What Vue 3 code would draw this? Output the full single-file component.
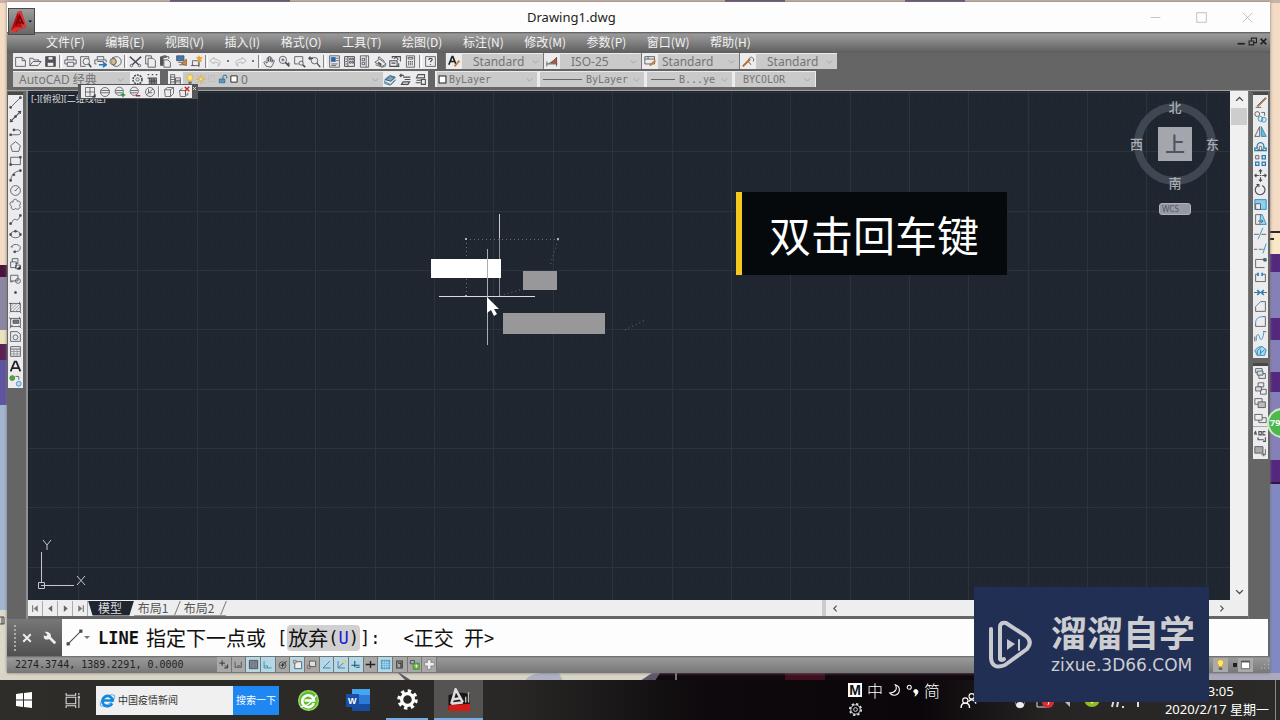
<script setup>
import { h } from 'vue'

const icons = {
  new: '<path d="M2 3h8l4 4v7H2zM10 3v4h4"/>',
  open: '<path d="M1 13V4h4l1 2h6v2M1 13l4-5h10l-4 5z"/>',
  save: '<path d="M2 2h12v12H2z" fill="#50545a"/><path d="M5 2h6v4H5zM4 9h8v5H4z" fill="#eee"/>',
  print: '<path d="M4 6V2h8v4M4 11H1V6h14v5h-3M4 9h8v5H4z"/>',
  preview: '<path d="M12 5V2H2v12h6"/><circle cx="9" cy="8" r="4"/><path d="M12 11l3 4" stroke-width="2"/>',
  publish: '<path d="M4 6V2h8v4M3 11H1V6h14v3M4 8h8"/><path d="M6 12h8M11 9l4 3-4 3" stroke="#2579b8" stroke-width="2"/>',
  sphere: '<circle cx="9" cy="8" r="6"/><path d="M4 3c6 2 6 8 1 10" /><circle cx="5" cy="8" r="4" fill="#c7a75f" opacity=".7"/>',
  cut: '<path d="M1 2l11 10M15 2L4 12" stroke-width="1.8"/><circle cx="3" cy="13" r="1.500"/><circle cx="13" cy="13" r="1.500"/>',
  copy: '<path d="M5 11H2V1h7v3M5 4h6l3 3v8H5z"/>',
  paste: '<path d="M5 13H2V2h10v3M5 1h4v2H5zM6 6h5l3 3v6H6z" /><path d="M2 3h3v9H2z" fill="#555"/>',
  match: '<path d="M2 1h9v6H2z" fill="#3f77bd"/><path d="M4 9h9M5 12h7" stroke="#555"/><path d="M8 11l6-6v8z" fill="#c78b35" stroke="#8d5d27"/>',
  block: '<path d="M3 7h8v6H3zM1 13h4M11 9v6"/><path d="M11 1l1 2 3 0-2 2 1 3-3-1-2 1 1-3-2-2h3z" fill="#e8a02d" stroke="#e8a02d"/>',
  undo: '<path d="M6 3L1 7l5 4V9c5-1 7 1 5 5 5-5 2-9-5-9z" stroke="#aaa"/>',
  redo: '<path d="M10 3l5 4-5 4V9C5 8 3 10 5 14 0 9 3 5 10 5z" stroke="#aaa"/>',
  pan: '<path d="M4 14L1 9l1-1 3 2V4l1-1 1 5V2h2v6l1-5 1 1v5l1-3 2 1-2 5-2 3z"/>',
  zoom: '<circle cx="6" cy="6" r="4.5"/><path d="M9 9l5 5" stroke-width="2"/><path d="M6 4v4M4 6h4M13 9v4M11 11h4"/>',
  zoomwin: '<path d="M2 2h10v7M2 2v9h5"/><circle cx="10" cy="10" r="2.5"/><path d="M12 12l3 3" stroke-width="2"/>',
  zoomprev: '<circle cx="8" cy="7" r="4"/><path d="M11 10l4 5M1 4h5M3 2L1 4l2 2" stroke-width="1.6"/>',
  props: '<path d="M2 1h12v14H2z"/><path d="M4 3h5v5H4z" fill="#2f68a8" stroke="#2f68a8"/><path d="M10 4h3M10 7h3M4 11h8M4 13h6"/>',
  dc: '<path d="M2 2h12v12H2zM6 2v12" stroke-width="1.2"/><path d="M8 4h2v2H8zM11 4h2v2h-2zM8 8h2v2H8zM11 8h2v2h-2zM3 5h2M3 8h2M3 11h2"/>',
  palette: '<path d="M3 1h10v14H3zM10 1v14M5 4h3v3H5zM5 9h3v3H5z"/>',
  sheet: '<path d="M1 9l6-4 8 6-5 3zM2 12l8 3 5-2M5 5l1-3 7 6"/><path d="M5 9l4 3" stroke-width="2"/>',
  markup: '<path d="M4 4V2h10v6M1 7h9v7H1zM3 10h5M6 5c2-3 5-2 5 1M12 10v4h-2" stroke-width="1.3"/>',
  calc: '<path d="M3 1h10v14H3zM5 3h6v2H5z"/><path d="M5 8h6M5 10h6M5 12h6" stroke-width="1.4" stroke-dasharray="1.5 1"/>',
  help: '<path d="M2 2h12v12H2z"/><path d="M6 6c0-3 5-2 4 0-1 1-2 1-2 3M8 11v1" stroke-width="1.5"/>',
  textstyle: '<path d="M1 12L5 2h1l4 10M3 8h5" stroke="#222" stroke-width="2"/><path d="M8 14l6-7" stroke="#c2843d" stroke-width="2.4"/>',
  dimstyle: '<path d="M1 11h13M1 8v6M13 3v11M3 11l9-6" /><path d="M6 10l7-7v7z" fill="#b45c43" stroke="#7d4b3a"/>',
  tablestyle: '<path d="M1 2h12v9H1zM1 5h12M5 2v3"/><path d="M7 13l7-6" stroke="#c2843d" stroke-width="2.6"/>',
  leader: '<path d="M8 8c0-8 8-6 6 0M8 8l3 4"/><path d="M1 14l9-9" stroke="#b76d38" stroke-width="2.6"/>',
  gear: '<circle cx="8" cy="8" r="5.5" stroke-width="2" stroke-dasharray="2.4 1.1"/><circle cx="8" cy="8" r="2"/>',
  wsgrid: '<path d="M4 6h9v8H4z" fill="#888"/><path d="M2 2h2M7 2h2M12 2h2M2 6l3 1M7 6v8M10 6v8M4 10h9" stroke-width="1.4"/>',
  layers: '<path d="M2 2h5v12H2zM2 5h5M2 8h5M2 11h5M8 6h6v8H8zM8 9h6M8 11h6"/>',
  bulb: '<path d="M5 9C1 4 5 1 8 1s7 3 3 8v2H5z" fill="#ffe56b" stroke="#c99b21"/><path d="M6 13h4v2H6z" fill="#777"/>',
  sun: '<circle cx="8" cy="8" r="3" fill="#ffe15b" stroke="#da9b25"/><path d="M8 0v4M8 12v4M0 8h4M12 8h4M2 2l3 3M11 11l3 3M14 2l-3 3M5 11l-3 3" stroke="#da9b25"/>',
  freeze: '<path d="M2 3h10v9H2zM2 7h5" stroke="#b5b5b5"/>',
  lock: '<path d="M2 8h9v6H2z" fill="#5797c4" stroke="#245e8d"/><path d="M8 8V4c0-3 6-3 6 0v3" stroke="#245e8d" stroke-width="1.5"/>',
  square: '<path d="M3 3h10v10H3z" fill="#fff" stroke="#222" stroke-width="1.5"/>',
  layerset: '<path d="M1 8l6-5 7 2-5 5zM1 11l7 3 6-6M1 9v4l7 2 6-6" stroke="#276e9b"/><path d="M2 8l6-4 5 2-5 4z" fill="#70abd0"/>',
  layerprev: '<path d="M5 5h9M7 8h7M5 11h8l-2 3H3zM1 3h5M3 1L1 3l2 2" stroke-width="1.4"/>',
  layerstate: '<path d="M5 2h8v4H3zM3 9h7M2 12h6M9 8h5v6H9z" stroke-width="1.3"/>',
  wire: '<path d="M2 2h12v12H2zM2 8h12M8 2v12"/><path d="M15 11v4h-4z" fill="#222"/>',
  ball: '<circle cx="8" cy="8" r="6"/><path d="M2 6h12M2 9h12"/>',
  ballplus: '<circle cx="7" cy="7" r="5.5"/><path d="M2 6h10M2 9h9"/><path d="M9 12h6M12 9v6" stroke="#2e9a35" stroke-width="2"/>',
  ballminus: '<circle cx="7" cy="7" r="5.5"/><path d="M2 6h10M2 9h9"/><path d="M9 13h6" stroke="#b52b25" stroke-width="2"/>',
  ballslash: '<circle cx="8" cy="8" r="6"/><path d="M3 12L12 4M6 4v5h5"/>',
  cube: '<path d="M2 5l4-3h8v8l-4 4H3zM2 5h8v9M10 5l4-3"/>',
  cubex: '<path d="M2 6l4-3M2 6h8v8H3zM10 6v6h3V9"/><path d="M9 1l6 6M15 1L9 7" stroke="#d22b28" stroke-width="2"/>',
  line: '<path d="M2 14L14 2"/><path d="M1 13h2v2H1zM13 1h2v2h-2z" fill="#444"/>',
  xline: '<path d="M1 15L15 1M2 11v3h3M11 2h3v3" stroke-width="1.3"/><path d="M7 7h2v2H7z" fill="#444"/>',
  pline: '<path d="M2 12h9c5 0 4-7-1-6H6"/><path d="M1 11h2v2H1zM5 5h2v2H5z" fill="#444"/>',
  polygon: '<path d="M8 2l6 5-2 7H4L2 7z"/>',
  rect: '<path d="M2 4h12v9H2z"/><path d="M1 12h2v2H1zM13 3h2v2h-2z" fill="#444"/>',
  arc: '<path d="M2 14C3 7 7 3 14 2"/><path d="M1 13h2v2H1zM5 6h2v2H5zM13 1h2v2h-2z" fill="#444"/>',
  circle: '<circle cx="8" cy="8" r="6"/><path d="M8 8l4-4M7 8h2"/>',
  cloud: '<path d="M5 3c3-3 5-1 5 1 4-1 5 3 3 5 2 4-2 6-5 4-3 3-6 0-5-3C0 8 1 4 5 5z"/>',
  spline: '<path d="M1 13c3 2 3-7 7-5s4-2 6-5"/><path d="M1 12h2v2H1zM13 2h2v2h-2z" fill="#444"/>',
  ellipse: '<ellipse cx="8" cy="8" rx="6" ry="4"/><path d="M1 7h2v2H1zM13 7h2v2h-2zM7 3h2v2H7z" fill="#444"/>',
  ellarc: '<path d="M3 6c2-5 11-3 11 1s-4 5-7 5"/><path d="M2 6h3M6 11h2v2H6z" fill="#444"/>',
  insert: '<path d="M4 6V2h7v6H8M2 6h7v7H2zM8 10h6v4H8z"/><path d="M14 11v4h-4z" fill="#222"/>',
  mkblock: '<path d="M2 4h9v7H2z"/><circle cx="11" cy="11" r="3"/><path d="M1 12h4"/>',
  point: '<path d="M7 7h2v2H7z" fill="#333"/>',
  hatch: '<path d="M2 3h12v10H2z"/><path d="M2 7l4-4M2 11l8-8M4 13L14 3M8 13l6-6" stroke="#8a8d92"/><path d="M0 3h3M13 1v3M1 14l2-2M13 13l2 2"/>',
  gradient: '<path d="M2 3h12v10H2z"/><path d="M5 5h7v4H5z" fill="#777"/><path d="M0 2l3 2M13 1v3M1 15l3-4M12 12l3 3"/>',
  region: '<path d="M2 2h8l4 3v9H2z"/><circle cx="8" cy="9" r="3"/>',
  table: '<path d="M2 2h12v12H2zM2 5h12"/><path d="M2 8h12M2 11h12M6 5v9M10 5v9" stroke="#8a8d92"/>',
  text: '<path d="M2 14L7 2h2l5 12M4 10h8" stroke="#222" stroke-width="2.2"/>',
  addsel: '<circle cx="4" cy="5" r="3" fill="#55a73b" stroke="#338426"/><path d="M8 3h4v4"/><circle cx="12" cy="12" r="3" fill="#b1ddf8" stroke="#3687bb"/>',
  erase: '<path d="M4 12l1 1L15 3l-1-1z" fill="#c69261" stroke="#7a4c30"/><path d="M2 14h7"/>',
  copyobj: '<circle cx="4" cy="5" r="3"/><path d="M9 3h4v4"/><circle cx="8" cy="11" r="3" stroke="#2484b6"/><circle cx="12" cy="12" r="3" stroke="#2484b6"/>',
  mirror: '<path d="M7 2v12H1z"/><path d="M9 2v12h6z" fill="#70bbdf" stroke="#287fa9"/>',
  offset: '<path d="M1 13h14v-3h-3c2-9-10-9-8 0H1z" stroke="#237ca9" stroke-width="1.5"/><path d="M4 12h3c-3-6 5-6 2 0h3"/>',
  array: '<path d="M2 2h4v4H2z"/><path d="M10 2h4v4h-4zM2 10h4v4H2zM10 10h4v4h-4z" stroke="#237cb5" stroke-width="1.5"/>',
  move: '<path d="M8 1v5M8 10v5M1 8h5M10 8h5M6 3l2-2 2 2M6 13l2 2 2-2M3 6L1 8l2 2M13 6l2 2-2 2M7 8h2" stroke-width="1.4"/>',
  rotate: '<path d="M5 3a6 6 0 1 0 5 0M3 2h3v3" stroke-width="1.4"/>',
  scale: '<path d="M1 2h14v12H1z" fill="#8dcff0" stroke="#237cb5"/><path d="M2 7h6v7H2z" fill="#eee"/>',
  stretch: '<path d="M2 2h6v12H2z"/><path d="M8 2h2l5 12H7z" fill="#a4d8f0" stroke="#237cb5"/><path d="M5 10h6M9 8l2 2-2 2"/>',
  trim: '<path d="M0 9h6M9 9h6" /><path d="M11 1L5 15" stroke="#2484b6"/>',
  extend: '<path d="M0 9h4M6 9h3"/><path d="M9 9h3M15 2l-4 12" stroke="#2484b6"/>',
  breakpt: '<path d="M2 13V3h11M2 13h11"/><path d="M12 2h3v3h-3z" fill="#237cb5"/>',
  break: '<path d="M5 4H2v9h12V4h-3"/><path d="M5 2v4M10 2v4" stroke="#237cb5" stroke-width="2"/>',
  join: '<path d="M0 8h16" /><path d="M4 5l3 3-3 3M12 5L9 8l3 3" stroke="#2484b6" stroke-width="2"/>',
  chamfer: '<path d="M2 8v6h12V2H8"/><path d="M2 8l6-6" stroke="#2484b6"/>',
  fillet: '<path d="M2 10v4h12V2h-3"/><path d="M2 10c0-5 3-8 9-8" stroke="#2484b6"/>',
  blend: '<path d="M3 13C2 4 6 4 7 9s4 3 5-6" stroke="#2484b6"/><path d="M11 2h4M1 14V8"/>',
  explode: '<path d="M1 8l4-4 5-1 5 4-2 7H4z" fill="#a8daf1" stroke="#237cb5"/><path d="M4 8l5-4M7 12l6-5M4 8v6M8 7v6" stroke="#237cb5"/>',
  front: '<path d="M2 2h8v5H2zM6 8h8v6H6z"/><path d="M4 5h7v5H4z" fill="#c7e4f2"/>',
  back: '<path d="M5 1h7v5H5zM8 9h7v6H8z"/><path d="M2 6h7v5H2z" fill="#ddd"/>',
  above: '<path d="M1 2h9v7H1z"/><path d="M5 6h9v7H5z" fill="#bbb"/>',
  under: '<path d="M6 7h9v6H6z"/><path d="M1 3h9v7H1z" fill="#eee"/>',
  abc: '<path d="M1 6V3l1-1 1 4M6 2v4h3V2zM14 2h-3v4h3M5 9v3h7M14 9v5h-3" stroke-width="1.3"/>',
  hatchback: '<path d="M9 12h5V5M12 14v-4"/><path d="M1 2h10v8H1z" fill="#aaa"/>',
  s1: '<path d="M2 6h8M6 2v8M10 9l4 4M9 13h5V8" stroke-width="1.4"/>',
  s2: '<path d="M3 4v8h9V4M6 10h4"/>',
  s3: '<path d="M2 2h12v12H2z" fill="#777b89"/><path d="M4 2v12M8 2v12M12 2v12" stroke="#8a8c98"/>',
  s4: '<path d="M3 3v10h11M3 10h5v3" stroke="#277795"/>',
  s5: '<circle cx="8" cy="9" r="5"/><path d="M8 9l6-6M5 9h6M8 6v6" stroke-width="1.4"/>',
  s6: '<path d="M4 4h10v10H4z" fill="#eee"/><path d="M2 2h4v4H2z" fill="#a0cce1" stroke="#a05a40"/>',
  s7: '<path d="M5 3h9v8H5z" fill="#ddd"/><path d="M2 9h4v5H2z" stroke="#995b47"/>',
  s8: '<path d="M13 3L3 13h11" stroke="#235f86"/>',
  s9: '<path d="M3 3v10h10M4 12l10-9" stroke="#305c79"/><path d="M10 2h4v4h-4z" fill="#efcf5d" stroke="none"/>',
  s10: '<path d="M2 9h12M7 3v9M9 12h5" stroke="#195579" stroke-width="1.6"/>',
  s11: '<path d="M1 8h14M8 3v10" stroke="#222" stroke-width="2"/>',
  s12: '<path d="M2 2h12v12H2z" fill="#6ab3dc" stroke="#397b9c"/><path d="M5 2v12M8 2v12M11 2v12M2 5h12M2 8h12M2 11h12" stroke="#9dd5f1"/>',
  s13: '<path d="M4 3h8v10H4zM6 6h4v6" stroke-width="1.5"/>',
  s14: '<path d="M2 2h6v5H2z"/><path d="M6 6h9v9H6z" fill="#62b94a" stroke="#3d7d30"/><path d="M8 10h5M11 8v5" stroke="#fff"/>',
  s15: '<path d="M5 1h5v4h5v5h-5v5H5v-5H1V5h4z" fill="#eee" stroke="#777"/>',
  down: '<path d="M3 6l5 5 5-5"/>', up: '<path d="M3 10l5-5 5 5" stroke-width="2"/>',
  left: '<path d="M10 3L5 8l5 5" stroke-width="2"/>', right: '<path d="M6 3l5 5-5 5" stroke-width="2"/>',
  downbold: '<path d="M3 6l5 5 5-5" stroke-width="2"/>',
  first: '<path d="M3 2v12" stroke-width="2"/><path d="M12 2v12L5 8z" fill="#777" stroke="none"/>',
  prev: '<path d="M11 2v12L4 8z" fill="#666" stroke="none"/>',
  next: '<path d="M5 2v12l7-6z" fill="#666" stroke="none"/>',
  last: '<path d="M13 2v12" stroke-width="2"/><path d="M4 2v12l7-6z" fill="#777" stroke="none"/>',
  x: '<path d="M3 3l10 10M13 3L3 13" stroke="#eee" stroke-width="2.6"/>',
  wrench: '<path d="M14 14L6 6" stroke="#eee" stroke-width="3"/><path d="M2 1l3 3-1 2-3-1c-1 4 3 6 6 4l2-2c1-4-3-7-7-6z" fill="#eee" stroke="none"/>',
  min: '<path d="M1 8h14"/>', max: '<path d="M1 1h14v14H1z"/>', close: '<path d="M1 1l14 14M15 1L1 15"/>',
  mdimin: '<path d="M1 12h13" stroke="#222" stroke-width="3"/>',
  mdimax: '<path d="M2 7h8v7H2zM6 6V2h9v8h-4" stroke="#222" stroke-width="2"/>',
  mdiclose: '<path d="M3 3l10 10M13 3L3 13" stroke="#222" stroke-width="3"/>',
  win: '<path d="M0 2l7-1v6.500H0zM8 1l8-1v7.500H8zM0 8.500h7V15l-7-1zM8 8.500h8V16l-8-1z" fill="#fff" stroke="none"/>',
  task: '<path d="M2 1v2h9V1M2 5h9v6H2zM2 15v-2h9v2M14 1v2M14 6v9" stroke="#ddd"/><path d="M13 4h2v2h-2z" fill="#ddd" stroke="none"/>',
  ie: '<ellipse cx="8" cy="8" rx="9" ry="4" transform="rotate(-35 8 8)" stroke="#69b7e9" stroke-width="1.2"/><path d="M13 11a5.500 5.500 0 1 1 .5-3H4" stroke="#1686d9" stroke-width="2.800"/>',
  browser: '<circle cx="8" cy="8" r="7.500" fill="#61bd30" stroke="#9bdf68"/><path d="M12 10a4.500 4.500 0 1 1 .2-2H5" stroke="#fff" stroke-width="2"/><path d="M2 13Q9 12 14 4" stroke="#fff"/>',
  biggear: '<circle cx="8" cy="8" r="6.500" fill="none" stroke="#fff" stroke-width="2.600" stroke-dasharray="2.550 2.550"/><circle cx="8" cy="8" r="4.500" stroke="#fff" stroke-width="2.500"/>',
  smallgear: '<circle cx="8" cy="8" r="6" stroke="#ddd" stroke-width="2" stroke-dasharray="2.400 2.300"/><circle cx="8" cy="8" r="5" stroke="#ddd"/><circle cx="8" cy="8" r="2" stroke="#ddd"/>',
  moon: '<path d="M9 1c3 5 0 10-7 10 4 5 12 3 12-4 0-3-2-5-5-6z" stroke="#fff" stroke-width="1.300"/>',
  punct: '<circle cx="4" cy="4" r="2.500" stroke="#fff" stroke-width="1.300"/><path d="M11 7c5-1 5 5 0 8 1-2 1-3 0-4-2 0-2-4 0-4z" fill="#fff" stroke="#fff"/>',
  people: '<circle cx="5" cy="8" r="2.500" stroke="#fff"/><circle cx="11" cy="4" r="2.500" stroke="#fff"/><path d="M1 15c0-6 8-6 8 0M8 9c2-3 6-2 7 2" stroke="#fff" stroke-width="1.300"/>',
  whitesq: '<path d="M2 3h12v11H2z" fill="#fff" stroke="#444"/><path d="M2 4h12" stroke-width="2"/>',
  acad: '<path d="M1 5l6-2 9 1v11H1z" fill="#1c1516" stroke="none"/><path d="M1 12l15-1v5H1z" fill="#d51b16" stroke="none"/><path d="M3 11L6 1l5 9M4 8l6-1M3 11l8-1" stroke="#ddd" stroke-width="1.800"/><path d="M15 3v7M13 6v4" stroke="#bbb"/>',
  grip: '<path d="M13 3h1M13 8h1M13 13h1M8 8h1M8 13h1M3 13h1" stroke="#ccc" stroke-width="2"/>',
}
const Icon = (p) => h('svg', { viewBox: '0 0 16 16', class: 'icon', 'aria-hidden': 'true', innerHTML: icons[p.name] })
Icon.props = ['name']

const menus = ['文件(F)', '编辑(E)', '视图(V)', '插入(I)', '格式(O)', '工具(T)', '绘图(D)', '标注(N)', '修改(M)', '参数(P)', '窗口(W)', '帮助(H)']
const standard = 'new open save | print preview publish sphere | cut copy paste match block | undo . redo . | pan zoom zoomwin zoomprev | props dc palette sheet markup calc | help'.split(' ')
const styleBoxes = [
  { icon: 'textstyle', label: '文字样式', text: 'Standard', size: 'indent' },
  { icon: 'dimstyle', label: '标注样式', text: 'ISO-25', size: 'indent' },
  { icon: 'tablestyle', label: '表格样式', text: 'Standard', size: 'flush' },
  { icon: 'leader', label: '引线样式', text: 'Standard', size: 'indent' },
]
const draw = 'line xline pline polygon rect arc circle cloud spline ellipse ellarc insert mkblock point hatch gradient region table text addsel'.split(' ')
const modify = 'erase copyobj mirror offset array move rotate scale stretch trim extend breakpt break join chamfer fillet blend explode'.split(' ')
const order = 'front back above under | abc hatchback'.split(' ')
const meshes = 'wire ball ballplus ballminus ballslash | cube cubex'.split(' ')
const status = Array.from({ length: 15 }, (_, i) => 's' + (i + 1))
const activeStatus = [3, 4, 6, 8, 9, 10, 12]
const columns = Array.from({ length: 44 }, (_, i) => Math.round(50 + i * 59.35))
const rows = Array.from({ length: 24 }, (_, i) => Math.round(1 + i * 59.35))
</script>

<template>
  <div class="desktop">
    <svg class="wallpaper" viewBox="0 0 1280 720" preserveAspectRatio="none" aria-hidden="true">
      <rect width="1280" height="720" fill="#f4dcc4" />
      <path d="M0 265h8v12H0z" fill="#4a1438" /><path d="M0 277h8v53H0z" fill="#8d87a3" />
      <path d="M0 330h8v14H0z" fill="#e9e2bd" /><path d="M0 344h8v16H0z" fill="#5a2252" />
      <path d="M0 360h8v45H0z" fill="#5f559f" /><path d="M0 405h8v205H0z" fill="#a3b5cf" /><path d="M0 610h8v64H0z" fill="#ddd8ca" />
      <path d="M0 617h4v7H0M2 617v7" fill="none" stroke="#444" />
      <path d="M0 0h1280v3H0z" fill="#c9b2a7" /><path d="M170 0h120v3H170zM725 0h60v3h-60zM905 0h60v3h-60z" fill="#665777" />
      <path d="M1269 232h11v22h-11z" fill="#f8e8c6" /><path d="M1269 232h11M1269 239h5" stroke="#352031" stroke-width="2" />
      <path d="M1269 254h11v230h-11z" fill="#8580b8" /><path d="M1269 254h11v18h-11zM1269 318h11v22h-11zM1269 372h11v20h-11zM1269 460h11v22h-11z" fill="#54287f" />
      <path d="M1269 484h11v196h-11z" fill="#8189c3" /><path d="M1269 483h11" stroke="#31143c" stroke-width="2" />
      <path d="M0 673h680v8H0z" fill="#d9d5c6" /><path d="M400 673l12 8h-6l-8-8M640 681l12-8h28v8z" fill="#5e556c" />
      <path d="M525 681c4-10 28-9 34-8l4 8z" fill="#aeb1c1" /><path d="M660 673h320v8H655z" fill="#130710" />
      <path d="M676 673v8" stroke="#ddd" /><path d="M785 673h40v8h-40z" fill="#401020" /><path d="M980 673h300v8H980z" fill="#aba9bb" />
    </svg>

    <main class="window">
      <header class="titlebar">
        <h1>Drawing1.dwg</h1>
        <div class="winctl">
          <button aria-label="最小化"><Icon name="min" /></button>
          <button aria-label="最大化"><Icon name="max" /></button>
          <button aria-label="关闭"><Icon name="close" /></button>
        </div>
      </header>
      <button class="appbtn" aria-label="应用程序菜单">
        <svg viewBox="0 0 26 26" aria-hidden="true">
          <path d="M2 22L9 3l4-1 5 17-8 2-2 3z" fill="#b90f12" /><path d="M9 3l4-1 5 17-4 1z" fill="#e03a38" />
          <path d="M7 17l4-10 4 9M8 14h6" fill="none" stroke="#7f0508" stroke-width="2" /><path d="M2 22l5-3 11 0-8 2-4 4z" fill="#e5322c" />
          <path d="M20 12h4l-2 2z" fill="#111" />
        </svg>
      </button>

      <nav class="menubar">
        <div class="menus"><button v-for="m in menus" :key="m">{{ m }}</button></div>
        <div class="mdi">
          <button aria-label="最小化图形"><Icon name="mdimin" /></button>
          <button aria-label="还原图形"><Icon name="mdimax" /></button>
          <button aria-label="关闭图形"><Icon name="mdiclose" /></button>
        </div>
      </nav>

      <div class="toolbars">
        <div class="row">
          <div class="bar standard">
            <template v-for="(n, i) in standard" :key="i">
              <i v-if="n === '|'" class="sep"></i>
              <i v-else-if="n === '.'" class="dot"></i>
              <button v-else :aria-label="n"><Icon :name="n" /></button>
            </template>
          </div>
          <div class="bar styles">
            <div v-for="s in styleBoxes" :key="s.label" class="stylebox">
              <button :aria-label="s.label"><Icon :name="s.icon" /></button>
              <label class="combo sans" :class="s.size"><select :aria-label="s.label"><option>{{ s.text }}</option></select><Icon name="down" /></label>
            </div>
          </div>
        </div>
        <div class="row">
          <div class="bar workspace">
            <label class="combo sans"><select aria-label="工作空间"><option>AutoCAD 经典</option></select><Icon name="down" /></label>
            <button aria-label="工作空间设置"><Icon name="gear" /></button>
            <button aria-label="我的工作空间"><Icon name="wsgrid" /></button>
          </div>
          <div class="bar layerbar">
            <button aria-label="图层特性"><Icon name="layers" /></button>
            <label class="combo sans layer">
              <Icon name="bulb" /><Icon name="sun" /><Icon name="freeze" /><Icon name="lock" /><Icon name="square" />
              <select aria-label="图层"><option>0</option></select><Icon name="down" />
            </label>
            <button aria-label="置为当前"><Icon name="layerset" /></button>
            <button aria-label="上一个图层"><Icon name="layerprev" /></button>
            <button aria-label="图层状态"><Icon name="layerstate" /></button>
          </div>
          <div class="bar props">
            <label class="combo mono color"><Icon name="square" /><select aria-label="颜色"><option>ByLayer</option></select><Icon name="down" /></label>
            <label class="combo mono ltype"><i class="rule"></i><select aria-label="线型"><option>ByLayer</option></select><Icon name="down" /></label>
            <label class="combo mono weight"><i class="rule"></i><select aria-label="线宽"><option>B...ye</option></select><Icon name="down" /></label>
            <label class="combo mono plot"><select aria-label="打印样式"><option>BYCOLOR</option></select><Icon name="down" /></label>
          </div>
        </div>
      </div>

      <section class="work">
        <aside class="gutter leftside">
          <div class="palette draw"><button v-for="n in draw" :key="n" :aria-label="n"><Icon :name="n" /></button></div>
        </aside>
        <div class="document">
          <div class="viewrow">
            <div class="canvas">
              <svg class="drawing" aria-hidden="true">
                <defs>
                  <pattern id="minor" width="12" height="12" patternUnits="userSpaceOnUse"><path d="M3.500 0v12M0 1.500h12" stroke="#212832" /></pattern>
                </defs>
                <rect width="100%" height="100%" fill="url(#minor)" />
                <g fill="#2b333d">
                  <rect v-for="x in columns" :key="'c' + x" :x="x" y="0" width="1" height="100%" />
                  <rect v-for="y in rows" :key="'r' + y" x="0" :y="y" width="100%" height="1" />
                </g>
                <g transform="translate(-28 -91)" fill="none">
                  <path d="M466 239.500h92M466.500 239v57M558 240l-8 26M500 296l38-12M625 330l20-10" stroke="#66707a" stroke-dasharray="1 3" />
                  <path d="M465 238h2v2h-2zM557 238h2v2h-2zM465 295h2v2h-2z" fill="#aab0b6" />
                  <path d="M499.500 214v24" stroke="#c8ccd0" /><path d="M499.500 238v58" stroke="#8a9097" />
                  <path d="M431 259h70v19h-70z" fill="#fff" />
                  <path d="M523 271h34v19h-34zM503 313h102v21H503z" fill="#98979a" />
                  <path d="M439 296.500h96" stroke="#d8dadd" /><path d="M487.500 249v96" stroke="#a9adb2" />
                  <path d="M487 297v16l4-3 3 6 3-2-3-5h5z" fill="#fff" />
                </g>
              </svg>
              <span class="viewlabel">[-][俯视][二维线框]</span>
              <div class="compass">
                <span class="n">北</span><span class="w">西</span><button>上</button><span class="e">东</span><span class="s">南</span>
              </div>
              <button class="wcs">WCS</button>
              <svg class="ucs" viewBox="0 0 50 50" aria-hidden="true">
                <path d="M3.500 12v30M3 45.500h33M.5 42.500h6v6h-6z" /><path d="M5 0l4 5 4-5M9 5v5M39 36l8 9M47 36l-8 9" />
              </svg>
              <div class="caption">双击回车键</div>
            </div>
            <div class="vscroll"><button aria-label="向上"><Icon name="up" /></button><i class="thumb"></i><button class="end" aria-label="向下"><Icon name="downbold" /></button></div>
          </div>
          <div class="tabs">
            <button class="nav" aria-label="首个"><Icon name="first" /></button>
            <button class="nav" aria-label="上一个"><Icon name="prev" /></button>
            <button class="nav" aria-label="下一个"><Icon name="next" /></button>
            <button class="nav" aria-label="末个"><Icon name="last" /></button>
            <button class="tab active">模型</button><button class="tab">布局1</button><button class="tab">布局2</button>
            <div class="hscroll"><button aria-label="向左"><Icon name="left" /></button><button class="end" aria-label="向右"><Icon name="right" /></button></div>
          </div>
        </div>
        <aside class="gutter rightside">
          <div class="palette modify"><button v-for="n in modify" :key="n" :aria-label="n"><Icon :name="n" /></button></div>
          <div class="palette order">
            <template v-for="n in order" :key="n"><i v-if="n === '|'" class="hsep"></i><button v-else :aria-label="n"><Icon :name="n" /></button></template>
          </div>
        </aside>
      </section>

      <div class="meshbar">
        <div class="bar">
          <template v-for="n in meshes" :key="n"><i v-if="n === '|'" class="sep"></i><button v-else :aria-label="n"><Icon :name="n" /></button></template>
        </div>
        <button class="shut" aria-label="关闭工具栏"><Icon name="x" /></button>
      </div>

      <section class="command">
        <div class="cmdtools">
          <i class="handle"></i>
          <button aria-label="关闭命令行"><Icon name="x" /></button>
          <button aria-label="自定义"><Icon name="wrench" /></button>
        </div>
        <div class="cmdline">
          <Icon name="line" /><i class="caret"></i>
          <label for="cmd"><b>LINE</b><span class="zh">指定下一点或</span></label>
          <span class="prompt">[<button><span class="zh">放弃</span>(<em>U</em>)</button>]:</span>
          <span class="prompt ortho">&lt;<span class="zh">正交</span><span>&nbsp;</span><span class="zh">开</span>&gt;</span>
          <input id="cmd" type="text" />
        </div>
      </section>

      <footer class="status">
        <span class="coords">2274.3744, 1389.2291, 0.0000</span>
        <div class="toggles"><button v-for="(n, i) in status" :key="n" :aria-label="n" :class="{ on: activeStatus.includes(i + 1) }"><Icon :name="n" /></button></div>
        <div class="right">
          <button aria-label="隔离对象"><Icon name="bulb" /></button><i class="bullet"></i>
          <button aria-label="全屏显示"><Icon name="whitesq" /></button><Icon class="sizer" name="grip" />
        </div>
      </footer>
    </main>

    <footer class="taskbar">
      <button class="task start" aria-label="开始"><Icon name="win" /></button>
      <button class="task view" aria-label="任务视图"><Icon name="task" /></button>
      <form class="search" @submit.prevent>
        <Icon name="ie" /><input aria-label="搜索" type="text" value="中国疫情新闻" /><button>搜索一下</button>
      </form>
      <button class="task app" aria-label="浏览器"><Icon name="browser" /></button>
      <button class="task app word" aria-label="Word">
        <svg viewBox="0 0 24 22" aria-hidden="true"><path d="M6 0h18v22H6z" fill="#2c7bd5" /><path d="M6 0h18v6H6z" fill="#47a4ee" /><path d="M6 15h18v7H6z" fill="#174c9d" /><path d="M0 5h13v13H0z" fill="#174ea7" /><text x="2" y="15" font-family="Liberation Sans" font-weight="700" font-size="9" fill="#fff">W</text></svg>
      </button>
      <button class="task app running" aria-label="设置"><Icon name="biggear" /></button>
      <button class="task app running current" aria-label="AutoCAD"><Icon name="acad" /></button>
      <div class="ime">
        <div><b>M</b><span>中</span><Icon name="moon" /><Icon name="punct" /><span>简</span></div>
        <Icon name="smallgear" />
      </div>
      <button class="task people" aria-label="人脉"><Icon name="people" /></button>
      <svg class="tray" viewBox="0 0 170 40" aria-hidden="true">
        <path d="M12 22l5-5 5 5" fill="none" stroke="#fff" /><ellipse cx="43" cy="20" rx="5" ry="8" fill="#111" stroke="#777" /><ellipse cx="43" cy="25" rx="4" ry="3" fill="#eee" />
        <path d="M60 15h12v12H60z" fill="none" stroke="#ddd" /><circle cx="71" cy="22" r="6" fill="#d92c34" /><path d="M70 19h3l-2 6" stroke="#fff" fill="none" />
        <path d="M84 18h4l5-5v14l-5-5h-4z" fill="#bbb" /><circle cx="115" cy="19" r="8" fill="#8ebd27" /><path d="M111 19l4 5 4-5z" fill="#fff14e" />
        <path d="M135 27l2-8M140 27l2-10M145 27h2M161 12v15" stroke="#ddd" stroke-width="2" />
      </svg>
      <div class="clock"><span>13:05</span><span>2020/2/17 星期一</span></div>
      <i class="peek"></i>
    </footer>

    <div class="badge">79</div>
    <div class="brand">
      <svg viewBox="0 0 48 50" aria-hidden="true">
        <path d="M13 33V7q0-5 6-4l20 13q7 6 1 13L18 45Q5 50 4 38V9" /><path d="M13 31v8q1 2 4 0" />
        <path d="M20 19v11l8-6z" class="solid" /><path d="M32 20v10" class="thin" />
      </svg>
      <div><strong>溜溜自学</strong><span>zixue.3D66.COM</span></div>
    </div>
  </div>
</template>

<style>
body { overflow: hidden; }
</style>

<style scoped>
* { box-sizing: border-box; }
.desktop { position: relative; display: flex; flex-direction: column; height: 100vh; overflow: hidden; font-family: "Noto Sans", "Noto Sans CJK SC", sans-serif; }
button, input, select { font: inherit; color: inherit; border: 0; padding: 0; margin: 0; background: none; border-radius: 0; min-width: 0; }
button { display: flex; align-items: center; justify-content: center; flex: none; }
.icon { display: block; width: 13px; height: 13px; flex: none; fill: none; stroke: #4b4e53; }
.wallpaper { position: absolute; inset: 0; width: 100%; height: 100%; }
.window { position: relative; flex: 1; min-height: 0; margin: 2px 10px 7px 7px; display: flex; flex-direction: column; background: #656565; box-shadow: 0 0 3px #777; }

.titlebar { height: 30px; flex: none; display: flex; align-items: center; background: #fdfdfd; padding-right: 17px; }
h1 { margin: 0 0 0 520px; font-size: 13px; font-weight: 400; color: #222; line-height: 20px; }
.winctl { margin-left: auto; display: flex; gap: 35px; }
.winctl .icon { width: 11px; height: 11px; stroke: #aaa9a2; }
.appbtn { position: absolute; left: 1px; top: 6px; width: 27px; height: 27px; background: linear-gradient(#9d9d9d, #676767); border: 1px solid #4a4a4a; }
.appbtn svg { width: 25px; height: 25px; }

.menubar { height: 21px; flex: none; display: flex; align-items: center; padding: 0 2px 2px 39px; background: linear-gradient(#555 0, #999 2px, #8e8e8e 30%, #5d5d5d); font: 12px/18px "Noto Sans CJK SC", sans-serif; color: #f2f2f2; }
.menus { width: 705px; display: flex; justify-content: space-between; }
.mdi { margin-left: auto; display: flex; gap: 2px; }
.mdi .icon { width: 9px; height: 9px; }

.toolbars { height: 38px; flex: none; display: flex; flex-direction: column; gap: 2px; padding-left: 6px; border-bottom: 1px solid #a3a3a3; }
.row { height: 16px; display: flex; gap: 8px; }
.bar { display: flex; align-items: center; background: #ececee; height: 16px; }
.bar button { width: 14px; height: 16px; }
.standard { width: 424px; justify-content: space-between; }
.sep { width: 3px; height: 13px; border-left: 1px solid #888; border-right: 1px solid #fff; }
.dot { width: 8px; height: 2px; border: solid #ececee; border-width: 0 3px; background: #777; }
.styles { width: 392px; }
.stylebox { display: flex; align-items: center; flex: 1; border-left: 1px solid #777; }
.stylebox button { width: 16px; }
.combo { display: flex; align-items: center; flex: 1; min-width: 0; height: 15px; background: #cacaca; color: #747474; }
.combo select { appearance: none; flex: 1; height: 15px; line-height: 15px; outline: 0; text-overflow: clip; overflow: hidden; }
.combo > .icon:last-child { width: 9px; height: 9px; stroke: #888; margin: 0 3px; }
.sans { font-size: 12px; }
.mono { font-family: "DejaVu Sans Mono", monospace; font-size: 10px; }
.mono.combo > .icon:last-child { margin: 0 3px 0 0; }
.indent select { padding-left: 11px; }
.flush select { padding-left: 4px; }
.workspace { width: 147px; }
.workspace .combo { padding-left: 6px; }
.workspace .combo > .icon:last-child { margin-right: 5px; }
.workspace button { width: 15px; }
.layerbar { width: 260px; }
.layerbar button { width: 15px; }
.layer { padding-left: 1px; }
.layer .icon { width: 10px; height: 10px; margin-left: 1px; }
.layer select { padding-left: 2px; }
.props { width: 381px; margin-left: -1px; padding: 0 1px; gap: 2px; }
.props .combo { flex: none; border-left: 1px solid #eee; }
.props .color { width: 101px; gap: 1px; }
.color .icon:first-child { width: 11px; height: 11px; }
.props .ltype { width: 105px; padding-left: 3px; gap: 4px; }
.props .weight { width: 86px; padding-left: 4px; gap: 4px; }
.props .plot { flex: 1; padding-left: 8px; }
.rule { width: 39px; height: 1px; flex: none; background: #666; }
.weight .rule { width: 24px; }

.work { flex: 1; min-height: 0; display: flex; }
.gutter { flex: none; display: flex; flex-direction: column; gap: 8px; padding-top: 4px; }
.leftside { width: 21px; border-right: 2px solid #8f8f8f; padding-left: 1px; }
.rightside { width: 22px; padding-left: 4px; border-left: 1px solid #777; }
.palette { width: 15px; display: grid; grid-auto-rows: 1fr; background: #ececee; box-shadow: 0 -3px 0 #484848; }
.palette button { width: 15px; height: 100%; min-height: 0; }
.draw { height: 293px; }
.modify { height: 263px; }
.order { display: flex; flex-direction: column; }
.order button { height: 15px; }
.hsep { height: 3px; border-top: 1px solid #aaa; }
.document { flex: 1; min-width: 0; display: flex; flex-direction: column; padding-bottom: 3px; }
.viewrow { flex: 1; min-height: 0; display: flex; }
.canvas { position: relative; flex: 1; min-width: 0; overflow: hidden; background: #1f2630; }
.drawing { position: absolute; inset: 0; width: 100%; height: 100%; }
.viewlabel { position: absolute; left: 3px; top: 1px; font-size: 9px; line-height: 14px; color: #ddd; white-space: nowrap; }
.compass { position: absolute; right: 14px; top: 12px; width: 82px; height: 82px; border: 8px solid #3f4753; border-radius: 50%; font: 500 13px/16px "Noto Sans CJK SC", sans-serif; color: #a9adb3; display: flex; align-items: center; justify-content: center; }
.compass button { width: 34px; height: 34px; background: #a4a6ad; color: #50545d; font-size: 20px; line-height: 24px; }
.compass span { position: absolute; }
.compass .n { top: -12px; }
.compass .s { bottom: -14px; }
.compass .w { left: -12px; }
.compass .e { right: -11px; }
.wcs { position: absolute; right: 39px; top: 112px; width: 32px; height: 12px; border-radius: 3px; background: #9699a3; border: 1px solid #b0b3bb; color: #555a66; font-size: 8px; line-height: 10px; justify-content: flex-start; padding-left: 2px; }
.ucs { position: absolute; left: 10px; bottom: 10px; width: 50px; height: 50px; fill: none; stroke: #c3c6ca; }
.caption { position: absolute; left: 708px; top: 101px; padding: 11px 28px 10px 27px; border-left: 6px solid #f4c81c; background: #05090b; color: #fff; font: 42px/62px "Noto Sans CJK SC", sans-serif; white-space: nowrap; }
.vscroll { width: 18px; flex: none; background: #f0f0f0; display: flex; flex-direction: column; align-items: center; }
.vscroll button { width: 18px; height: 17px; }
.vscroll .icon { width: 11px; height: 11px; }
.thumb { width: 16px; height: 17px; background: #cdcdcd; }
.end { margin-top: auto; }
.tabs { height: 16px; flex: none; display: flex; align-items: center; background: #eee; font: 12px/14px "Noto Sans CJK SC", sans-serif; color: #555; }
.nav { width: 15px; height: 15px; border-right: 1px solid #aaa; }
.nav .icon { width: 9px; height: 9px; stroke: #777; }
.tab { position: relative; height: 15px; width: 46px; padding-right: 8px; border-bottom: 1px solid #999; }
.tab::after { content: ""; position: absolute; right: 2px; top: 0; width: 1px; height: 14px; background: #777; transform: skewX(-22deg); }
.tab.active { width: 46px; padding: 0 2px 0 0; background: #1f2630; color: #ddd; border: 0; clip-path: polygon(0 0, 100% 0, 90% 100%, 10% 100%); }
.tab.active::after { content: none; }
.hscroll { margin-left: auto; width: 426px; max-width: 60%; height: 16px; border-left: 4px solid #ccc; display: flex; align-items: center; padding: 0 18px 0 0; }
.hscroll .end { margin: 0 0 0 auto; }
.hscroll button { width: 18px; }
.hscroll .icon { width: 9px; height: 9px; }

.meshbar { position: absolute; left: 71px; top: 82px; display: flex; border: 1px solid #555; border-left-width: 3px; height: 15px; background: #555; }
.meshbar .bar { height: 13px; padding: 0 1px; }
.meshbar .bar button { width: 15px; height: 13px; }
.meshbar .bar .icon { width: 12px; height: 12px; }
.meshbar .bar .sep { width: 2px; margin: 0 1px; height: 11px; }
.shut { width: 5px; height: 6px; }
.shut .icon { width: 5px; height: 5px; }

.command { height: 37px; flex: none; display: flex; padding-right: 2px; }
.cmdtools { width: 55px; flex: none; display: flex; align-items: center; gap: 10px; padding-left: 7px; background: linear-gradient(#777, #505050); }
.handle { width: 2px; height: 26px; margin-right: -5px; border-left: 2px dotted #aaa; }
.cmdtools .icon { width: 12px; height: 12px; }
.cmdtools button:last-child .icon { width: 14px; height: 14px; }
.cmdline { flex: 1; min-width: 0; display: flex; align-items: center; background: #fdfdfd; padding-left: 4px; font: 17px/28px "DejaVu Sans Mono", monospace; color: #111; white-space: pre; }
.cmdline > .icon { width: 17px; height: 17px; }
.caret { border: solid transparent; border-width: 3px 3px 0; border-top-color: #777; margin: 0 8px 0 1px; }
.cmdline label { display: flex; align-items: center; gap: 7px; }
.zh { font: 20px/26px "Noto Sans CJK SC", sans-serif; }
.prompt { margin-left: 11px; display: flex; align-items: center; }
.prompt button { height: 26px; background: #d0d0d0; border-radius: 4px; padding: 0 1px; }
.prompt em { font-style: normal; color: #2118d6; }
.prompt.ortho { margin-left: 23px; }
.cmdline input { flex: 1; outline: 0; }

.status { height: 17px; flex: none; display: flex; align-items: center; background: linear-gradient(#666, #999 2px, #777); padding: 0 0 0 8px; }
.coords { width: 202px; font: 10px/14px "DejaVu Sans Mono", monospace; color: #222; white-space: nowrap; }
.toggles { width: 220px; height: 15px; display: grid; grid-template-columns: repeat(15, 1fr); }
.toggles button { background: #a8a8a8; border-right: 1px solid #777; }
.toggles button.on { background: #b4d8e6; }
.toggles .icon { width: 11px; height: 11px; stroke: #333; }
.right { margin-left: auto; display: flex; align-items: center; gap: 1px; }
.right button { width: 15px; height: 14px; background: #aaa; }
.right .icon { width: 11px; height: 11px; }
.bullet { width: 4px; height: 4px; background: #222; margin-left: 4px; }
.right .sizer { margin-left: 5px; }

.taskbar { position: relative; height: 40px; flex: none; display: flex; align-items: center; background: linear-gradient(90deg, #2e2d29 0, #292826 40%, #0d090c 55%, #0b060a 72%, #262523 82%, #2b2a28); color: #fff; }
.task { height: 40px; width: 48px; }
.start .icon { width: 16px; height: 16px; }
.view .icon { width: 17px; height: 17px; }
.search { display: flex; align-items: center; width: 183px; height: 29px; background: #f0f0f0; color: #333; font: 12px/18px "Noto Sans CJK SC", sans-serif; padding-left: 4px; margin-right: 4px; }
.search .icon { width: 15px; height: 15px; overflow: visible; }
.search input { flex: 1; width: 40px; padding-left: 3px; outline: 0; font-size: 10px; }
.search button { width: 46px; height: 29px; background: #1f87f2; color: #fff; font-size: 10px; }
.app { width: 50px; }
.app .icon { width: 21px; height: 21px; }
.word svg { width: 24px; height: 22px; }
.running { border-bottom: 2px solid #75aee5; width: 42px; margin: 0 3px; }
.current { width: 49px; background: #555453; }
.current .icon { width: 23px; height: 23px; }
.ime { margin-left: auto; width: 111px; align-self: stretch; font: 16px/18px "Noto Sans CJK SC", sans-serif; }
.ime > div { display: flex; align-items: center; gap: 5px; height: 20px; }
.ime b { width: 14px; height: 14px; font: 700 14px/14px "Liberation Sans", sans-serif; text-align: center; background: #fff; color: #111; }
.ime span { font-weight: 300; }
.ime div .icon { width: 13px; height: 13px; }
.ime > .icon { width: 15px; height: 15px; margin-top: 2px; }
.people { width: 18px; }
.people .icon { width: 17px; height: 17px; }
.tray { width: 170px; height: 40px; flex: none; }
.clock { width: 116px; display: flex; flex-direction: column; align-items: center; font: 13px/18px "Noto Sans", "Noto Sans CJK SC", sans-serif; white-space: nowrap; margin-left: 12px; }
.peek { width: 5px; height: 40px; border-left: 1px solid #888; }

.badge { position: absolute; right: -17px; top: 408px; width: 30px; height: 30px; border-radius: 50%; background: #4eb84d; border: 2px solid #c8eac5; color: #fff; font-size: 9px; font-weight: 700; line-height: 26px; padding-left: 1px; }
.brand { position: absolute; right: 71px; bottom: 18px; width: 235px; height: 115px; background: #222f55; color: #cccdd0; display: flex; align-items: center; gap: 16px; padding-left: 13px; }
.brand svg { width: 48px; height: 50px; fill: none; stroke: #c7c9cd; stroke-width: 4; stroke-linecap: round; stroke-linejoin: round; }
.brand .solid { fill: #c7c9cd; stroke: none; }
.brand .thin { stroke-width: 2; }
.brand div { display: flex; flex-direction: column; gap: 6px; padding-bottom: 4px; }
.brand strong { font: 700 36px/38px "Noto Sans CJK SC", sans-serif; }
.brand span { font: 17px/18px "DejaVu Sans", sans-serif; }
</style>
